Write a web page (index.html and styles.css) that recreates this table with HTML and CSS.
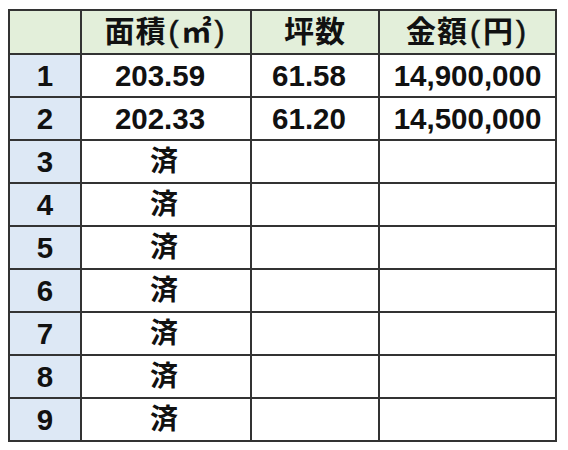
FILE: index.html
```html
<!DOCTYPE html>
<html lang="ja">
<head>
<meta charset="utf-8">
<title>表</title>
<link rel="stylesheet" href="styles.css">
</head>
<body>
<table class="sheet">
  <colgroup>
    <col class="c-no">
    <col class="c-area">
    <col class="c-tsubo">
    <col class="c-price">
  </colgroup>
  <thead>
    <tr class="head">
      <th class="corner"></th>
      <th>面積<span class="paren">(</span>㎡<span class="paren">)</span></th>
      <th>坪数</th>
      <th>金額<span class="paren">(</span>円<span class="paren">)</span></th>
    </tr>
  </thead>
  <tbody>
    <tr><th class="no">1</th><td class="shift">203.59</td><td class="shift">61.58</td><td>14,900,000</td></tr>
    <tr><th class="no">2</th><td class="shift">202.33</td><td class="shift">61.20</td><td>14,500,000</td></tr>
    <tr><th class="no">3</th><td class="done">済</td><td></td><td></td></tr>
    <tr><th class="no">4</th><td class="done">済</td><td></td><td></td></tr>
    <tr><th class="no">5</th><td class="done">済</td><td></td><td></td></tr>
    <tr><th class="no">6</th><td class="done">済</td><td></td><td></td></tr>
    <tr><th class="no">7</th><td class="done">済</td><td></td><td></td></tr>
    <tr><th class="no">8</th><td class="done">済</td><td></td><td></td></tr>
    <tr><th class="no">9</th><td class="done">済</td><td></td><td></td></tr>
  </tbody>
</table>
</body>
</html>
```

FILE: styles.css
```css
html, body {
  margin: 0;
  padding: 0;
  background: #ffffff;
}

body {
  padding: 9px 0 0 8px;
  font-family: "Liberation Sans", "Noto Sans CJK JP", sans-serif;
  color: #111111;
}

.sheet {
  border-collapse: collapse;
  table-layout: fixed;
  width: 547px;
  border: 2px solid #333333;
}

.c-no { width: 72px; }
.c-area { width: 170px; }
.c-tsubo { width: 128px; }
.c-price { width: 177px; }

.sheet th,
.sheet td {
  border: 2px solid #333333;
  padding: 0;
  text-align: center;
  vertical-align: middle;
  font-size: 29.5px;
  font-weight: bold;
  line-height: 1;
}

.head th {
  height: 42px;
  background: #e3efda;
  font-size: 30px;
  letter-spacing: 1px;
}

.head .paren {
  display: inline-block;
  padding: 0 2px;
  font-weight: normal;
  -webkit-text-stroke: 0.6px #111111;
}

.sheet tbody tr th,
.sheet tbody tr td {
  height: 41px;
}

.sheet td.shift {
  padding-right: 12px;
}

.sheet td.done {
  padding-right: 4px;
  font-size: 28px;
}

.sheet .no {
  background: #dde8f5;
}
```
